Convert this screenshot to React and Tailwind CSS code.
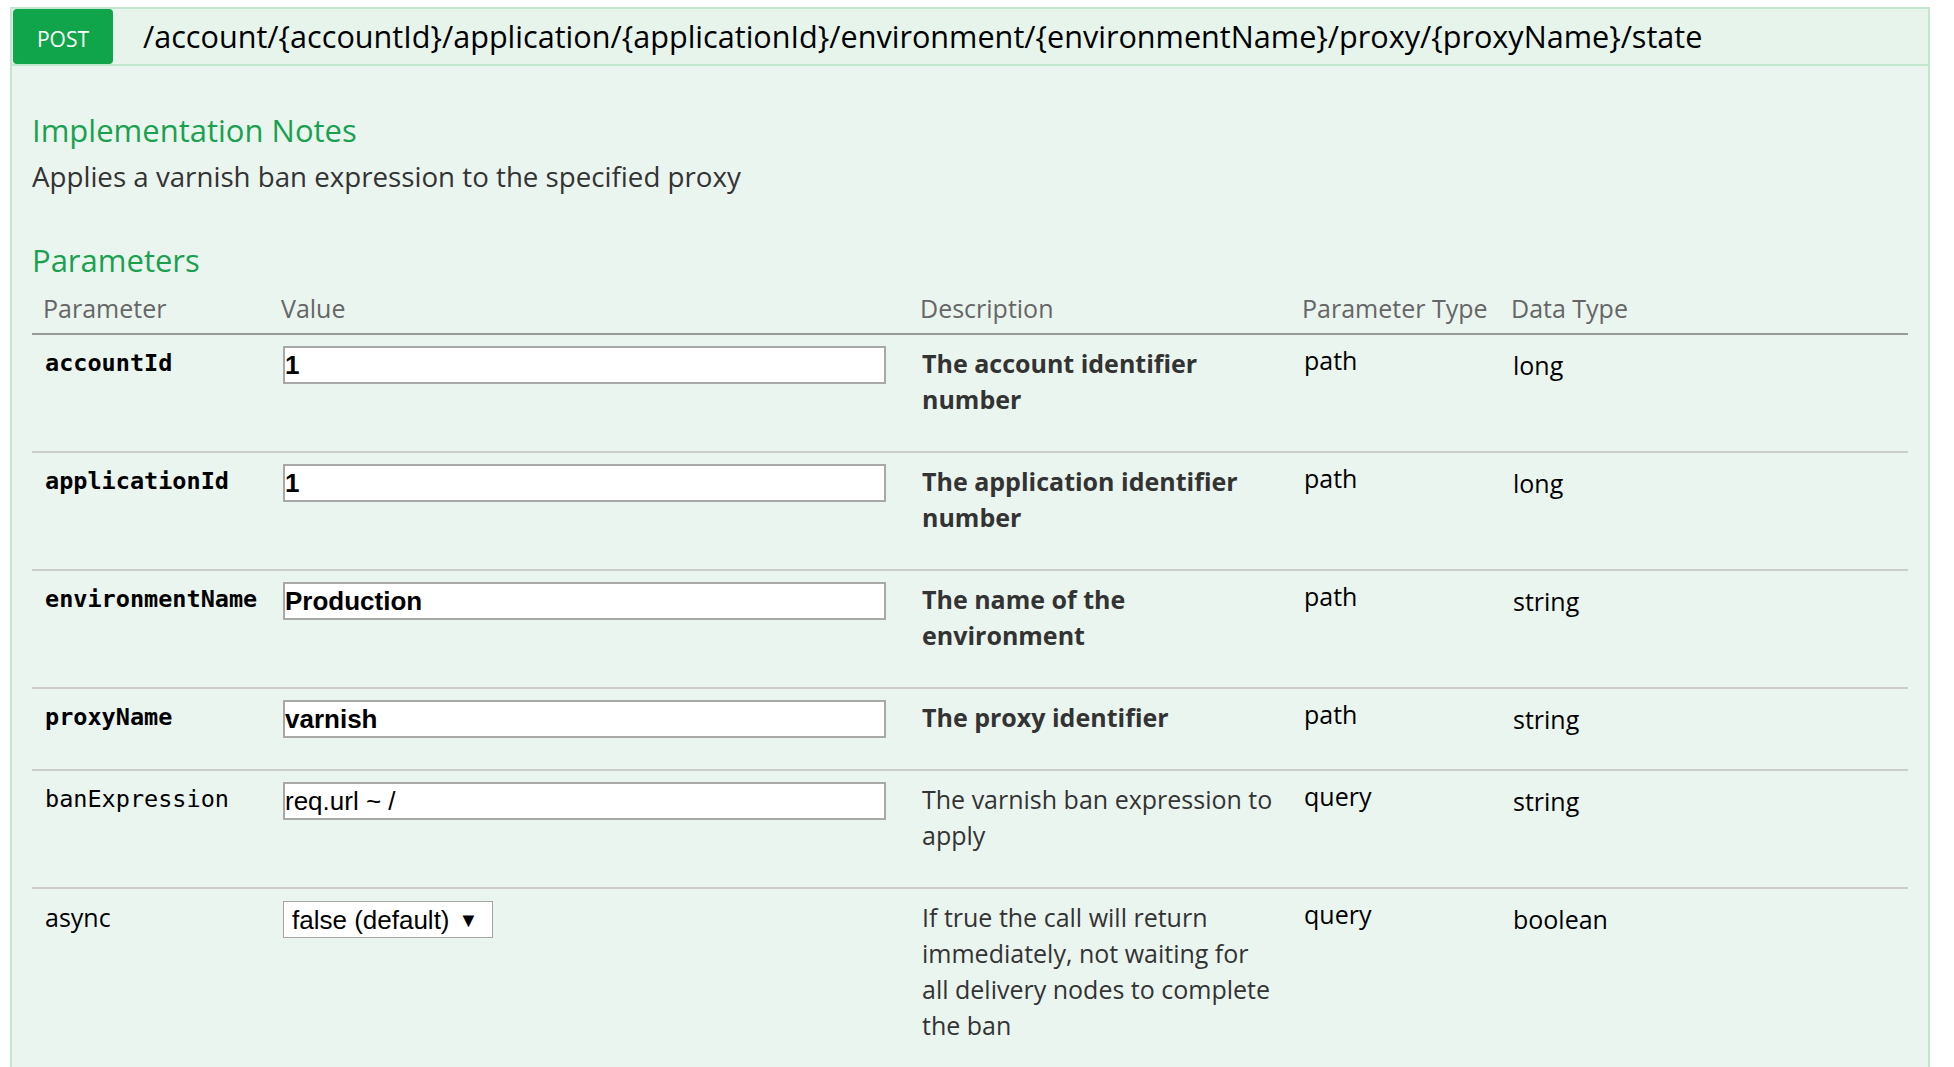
import React from 'react';

const rows = [
  { name: 'accountId', value: '1', desc: 'The account identifier number', ptype: 'path', dtype: 'long', required: true },
  { name: 'applicationId', value: '1', desc: 'The application identifier number', ptype: 'path', dtype: 'long', required: true },
  { name: 'environmentName', value: 'Production', desc: 'The name of the environment', ptype: 'path', dtype: 'string', required: true },
  { name: 'proxyName', value: 'varnish', desc: 'The proxy identifier', ptype: 'path', dtype: 'string', required: true },
  { name: 'banExpression', value: 'req.url ~ /', desc: 'The varnish ban expression to apply', ptype: 'query', dtype: 'string' },
  { name: 'async', select: 'false (default)', desc: 'If true the call will return immediately, not waiting for all delivery nodes to complete the ban', ptype: 'query', dtype: 'boolean' },
];

const sans = "font-['Open_Sans','Noto_Sans',sans-serif]";
const mono = "font-['DejaVu_Sans_Mono','Liberation_Mono',monospace]";
const arial = "font-['Liberation_Sans',Arial,sans-serif]";
const grid = 'grid grid-cols-[238px_639px_382px_210px_1fr]';

function ParamRow({ row }) {
  return (
    <div className={`${grid} border-t-2 border-[#cccccc] leading-[36px] pb-[30px]`}>
      <div className="pl-[13px] pt-[10px]">
        {row.name === 'async' ? (
          <span className={`${sans} text-[25px] text-black`}>{row.name}</span>
        ) : (
          <span className={`${mono} text-[23.5px] text-black ${row.required ? 'font-bold' : ''}`}>{row.name}</span>
        )}
      </div>
      <div className="pl-[13px] pt-[11px]">
        {row.select ? (
          <div className={`${arial} inline-flex items-center h-[37px] w-[210px] border border-[#a6a6a6] bg-white pl-[8px] text-[26px] text-black mt-[1px]`}>
            {row.select}
            <span className="ml-[9px] text-[20px]">▼</span>
          </div>
        ) : (
          <div className={`${arial} h-[38px] w-[603px] border-2 border-[#a8a8a8] bg-white text-[26px] leading-[34px] text-black ${row.required ? 'font-bold' : ''}`}>
            {row.value}
          </div>
        )}
      </div>
      <div className={`${sans} pl-[13px] pr-[10px] pt-[10px] pb-[4px] text-[25px] text-[#333333] ${row.required ? 'font-bold' : ''}`}>
        {row.desc}
      </div>
      <div className={`${sans} pl-[13px] pt-[7px] text-[25px] text-black`}>{row.ptype}</div>
      <div className={`${sans} pl-[12px] pt-[12px] text-[25px] text-black`}>{row.dtype}</div>
    </div>
  );
}

export default function App() {
  return (
    <div className="min-h-screen bg-white pt-[7px] pl-[10px]">
      <div className="w-[1920px] border-2 border-b-0 border-[#c3e6cf] bg-[#ebf5ef]">
        <div className="flex items-center h-[57px] bg-[#e6f4eb] border-b-2 border-[#c3e6cf]">
          <div className={`${sans} ml-px flex items-center justify-center h-[55px] w-[100px] rounded-[4px] bg-[#10a54a] pt-[7px] text-[21px] text-white`}>
            POST
          </div>
          <div className={`${sans} ml-[30px] text-[30.6px] text-black`}>
            /account/{'{accountId}'}/application/{'{applicationId}'}/environment/{'{environmentName}'}/proxy/{'{proxyName}'}/state
          </div>
        </div>

        <div className="px-[20px] pt-[46px]">
          <h4 className={`${sans} text-[31px] leading-[37px] text-[#1aa14f]`}>Implementation Notes</h4>
          <p className={`${sans} mt-[7px] text-[27.7px] leading-[40px] text-[#333333]`}>
            Applies a varnish ban expression to the specified proxy
          </p>

          <h4 className={`${sans} mt-[46px] text-[31px] leading-[37px] text-[#1aa14f]`}>Parameters</h4>
          <div className={`${grid} ${sans} mt-[11px] pb-[7px] text-[25px] leading-[36px] text-[#666666] border-b-2 border-[#999999]`}>
            <div className="pl-[11px]">Parameter</div>
            <div className="pl-[11px]">Value</div>
            <div className="pl-[11px]">Description</div>
            <div className="pl-[11px]">Parameter Type</div>
            <div className="pl-[10px]">Data Type</div>
          </div>
          <div className="[&>*:first-child]:border-t-0">
            {rows.map((row) => (
              <ParamRow key={row.name} row={row} />
            ))}
          </div>
        </div>
      </div>
    </div>
  );
}
